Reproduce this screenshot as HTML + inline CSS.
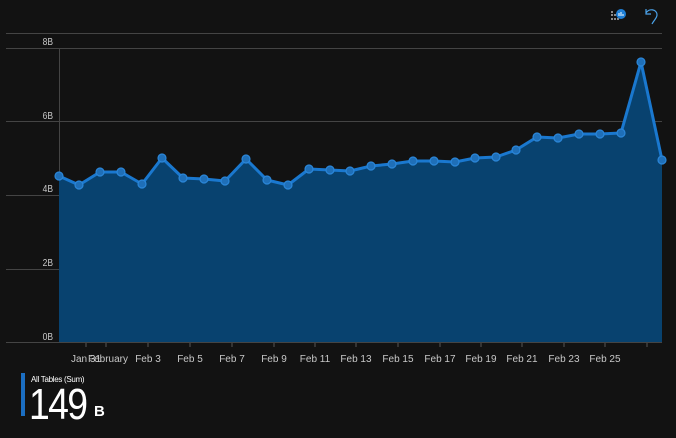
<!DOCTYPE html>
<html><head><meta charset="utf-8"><style>
html,body{margin:0;padding:0;background:#121212;width:676px;height:438px;overflow:hidden;font-family:"Liberation Sans",sans-serif}
</style></head><body>
<svg width="676" height="438" viewBox="0 0 676 438" style="position:absolute;left:0;top:0">
<rect width="676" height="438" fill="#121212"/>
<g fill="#8a8a8a">
<rect x="611" y="11" width="2" height="2"/><rect x="611" y="14" width="2" height="2"/><rect x="611" y="18" width="2" height="2"/>
<rect x="614" y="18" width="2" height="2"/><rect x="617" y="18" width="2" height="2"/><rect x="614" y="14" width="2" height="2"/>
</g>
<circle cx="621" cy="14" r="5" fill="#1e7fd6"/>
<path d="M619 16v-3M621 16v-4M623 16v-2" stroke="#fff" stroke-width="1"/>
<path d="M646 9l0 5 5 0M646 13c3-5 11-4 11 2c0 3-3 5-5 9" fill="none" stroke="#4ba3ea" stroke-width="1.2"/>
<g stroke="#444" stroke-width="1">
<line x1="6" y1="33.5" x2="662" y2="33.5"/>
<line x1="6" y1="48.5" x2="662" y2="48.5"/>
<line x1="6" y1="121.5" x2="662" y2="121.5"/>
<line x1="6" y1="195.5" x2="662" y2="195.5"/>
<line x1="6" y1="269.5" x2="662" y2="269.5"/>
<line x1="6" y1="342.5" x2="662" y2="342.5"/>
<line x1="59.5" y1="48" x2="59.5" y2="342"/>
</g>
<g fill="#c8c8c8" font-size="10" text-anchor="end">
<text x="53" y="45" transform="scale(0.85,1) translate(9.35,0)">8B</text><text x="53" y="119" transform="scale(0.85,1) translate(9.35,0)">6B</text><text x="53" y="192" transform="scale(0.85,1) translate(9.35,0)">4B</text><text x="53" y="266" transform="scale(0.85,1) translate(9.35,0)">2B</text><text x="53" y="340" transform="scale(0.85,1) translate(9.35,0)">0B</text>
</g>
<path d="M59,176 L79,185 L100,172 L121,172 L142,184 L162,158 L183,178 L204,179 L225,181 L246,159 L267,180 L288,185 L309,169 L330,170 L350,171 L371,166 L392,164 L413,161 L434,161 L455,162 L475,158 L496,157 L516,150 L537,137 L558,138 L579,134 L600,134 L621,133 L641,62 L662,160 L662,342 L59,342 Z" fill="#08426f"/>
<path d="M59,176 L79,185 L100,172 L121,172 L142,184 L162,158 L183,178 L204,179 L225,181 L246,159 L267,180 L288,185 L309,169 L330,170 L350,171 L371,166 L392,164 L413,161 L434,161 L455,162 L475,158 L496,157 L516,150 L537,137 L558,138 L579,134 L600,134 L621,133 L641,62 L662,160" fill="none" stroke="#1a78cf" stroke-width="3" stroke-linejoin="round"/>
<g fill="#1f6fb8" stroke="#2b86d8" stroke-width="1.2">
<circle cx="59" cy="176" r="4"/><circle cx="79" cy="185" r="4"/><circle cx="100" cy="172" r="4"/><circle cx="121" cy="172" r="4"/><circle cx="142" cy="184" r="4"/><circle cx="162" cy="158" r="4"/><circle cx="183" cy="178" r="4"/><circle cx="204" cy="179" r="4"/><circle cx="225" cy="181" r="4"/><circle cx="246" cy="159" r="4"/><circle cx="267" cy="180" r="4"/><circle cx="288" cy="185" r="4"/><circle cx="309" cy="169" r="4"/><circle cx="330" cy="170" r="4"/><circle cx="350" cy="171" r="4"/><circle cx="371" cy="166" r="4"/><circle cx="392" cy="164" r="4"/><circle cx="413" cy="161" r="4"/><circle cx="434" cy="161" r="4"/><circle cx="455" cy="162" r="4"/><circle cx="475" cy="158" r="4"/><circle cx="496" cy="157" r="4"/><circle cx="516" cy="150" r="4"/><circle cx="537" cy="137" r="4"/><circle cx="558" cy="138" r="4"/><circle cx="579" cy="134" r="4"/><circle cx="600" cy="134" r="4"/><circle cx="621" cy="133" r="4"/><circle cx="641" cy="62" r="4"/><circle cx="662" cy="160" r="4"/>
</g>
<g stroke="#555">
<line x1="86" y1="343" x2="86" y2="347"/><line x1="106" y1="343" x2="106" y2="347"/><line x1="148" y1="343" x2="148" y2="347"/><line x1="190" y1="343" x2="190" y2="347"/><line x1="232" y1="343" x2="232" y2="347"/><line x1="274" y1="343" x2="274" y2="347"/><line x1="315" y1="343" x2="315" y2="347"/><line x1="356" y1="343" x2="356" y2="347"/><line x1="398" y1="343" x2="398" y2="347"/><line x1="440" y1="343" x2="440" y2="347"/><line x1="481" y1="343" x2="481" y2="347"/><line x1="522" y1="343" x2="522" y2="347"/><line x1="564" y1="343" x2="564" y2="347"/><line x1="605" y1="343" x2="605" y2="347"/><line x1="647" y1="343" x2="647" y2="347"/>
</g>
<g fill="#c8c8c8" font-size="10" text-anchor="middle">
<text x="86" y="362">Jan 31</text><text x="108" y="362">February</text><text x="148" y="362">Feb 3</text><text x="190" y="362">Feb 5</text><text x="232" y="362">Feb 7</text><text x="274" y="362">Feb 9</text><text x="315" y="362">Feb 11</text><text x="356" y="362">Feb 13</text><text x="398" y="362">Feb 15</text><text x="440" y="362">Feb 17</text><text x="481" y="362">Feb 19</text><text x="522" y="362">Feb 21</text><text x="564" y="362">Feb 23</text><text x="605" y="362">Feb 25</text>
</g>
<rect x="21" y="373" width="4" height="43" fill="#1b6ec2"/>
<text x="31" y="382" fill="#fff" font-size="8" letter-spacing="-0.3">All Tables (Sum)</text>
<text x="0" y="0" fill="#fff" font-size="44" letter-spacing="-2" transform="translate(29,419) scale(0.85,1)">149</text>
<text x="94" y="416" fill="#fff" font-size="15" font-weight="bold">B</text>
</svg>
</body></html>
